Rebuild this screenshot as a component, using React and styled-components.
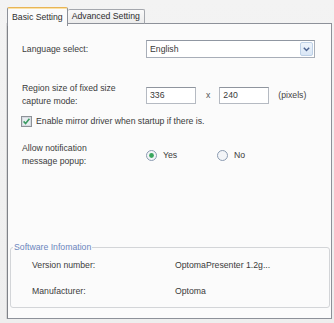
import styled, { createGlobalStyle } from 'styled-components';

const GlobalStyle = createGlobalStyle`
  html, body {
    margin: 0;
    padding: 0;
    background: #f1f1f1;
  }
  * {
    box-sizing: border-box;
  }
`;

// Fenêtre entière
const Screen = styled.div`
  width: 334px;
  height: 323px;
  padding: 7px 0 0 7px;
  font-family: 'Liberation Sans', Arial, sans-serif;
  font-size: 8.7px;
  color: #3a3a3a;
  background: linear-gradient(#f3f3f3, #eeeeee);
`;

const TabBar = styled.div`
  display: flex;
  align-items: flex-end;
  height: 17px;
  margin-bottom: -1px;
  position: relative;
  z-index: 1;
`;

const Tab = styled.div`
  display: flex;
  align-items: center;
  padding: 0 4px;
  height: ${(p) => (p.$active ? '19px' : '15px')};
  line-height: 1;
  border: 1px solid ${(p) => (p.$active ? '#8d9199' : '#a4a7ad')};
  border-top: 1px solid ${(p) => (p.$active ? '#e8b556' : '#a4a7ad')};
  border-bottom: ${(p) => (p.$active ? 'none' : '1px solid #8d9199')};
  border-left: ${(p) => (p.$active ? '1px solid #8d9199' : 'none')};
  background: ${(p) => (p.$active ? '#fbfbfb' : 'linear-gradient(#fafafa, #ececec)')};
  border-radius: 2px 2px 0 0;
  color: #2e2e2e;
  padding-top: ${(p) => (p.$active ? '1px' : '0')};
  margin-bottom: ${(p) => (p.$active ? '-2px' : '0')};
  box-shadow: ${(p) => (p.$active ? 'inset 0 1px 0 #fbe1a6' : 'none')};
`;

const Panel = styled.div`
  width: 325px;
  height: 296px;
  display: flex;
  flex-direction: column;
  background: #fbfbfb;
  border: 1px solid #8d9199;
  border-left-color: #7f8288;
  box-shadow: -1px 0 0 #d8d8d8;
`;

const Form = styled.div`
  display: flex;
  flex-direction: column;
  padding: 16px 0 0 14px;
`;

const Row = styled.div`
  display: flex;
  align-items: center;
  margin-top: ${(p) => p.$gap || 0}px;
`;

const Label = styled.div`
  width: 124px;
  line-height: 13px;
  color: #3c3c3c;
`;

const Select = styled.div`
  width: 169px;
  height: 18px;
  display: flex;
  align-items: center;
  justify-content: space-between;
  padding: 1px 1px 1px 3px;
  background: #fff;
  border: 1px solid #a8aeb8;
  border-top-color: #9097a2;
`;

const DropButton = styled.div`
  width: 13px;
  height: 14px;
  display: flex;
  align-items: center;
  justify-content: center;
  border: 1px solid #bdd0e6;
  border-radius: 2px;
  background: linear-gradient(#eef4fb, #d9e6f5);
`;

const TextBox = styled.div`
  width: ${(p) => p.$w}px;
  height: 17px;
  display: flex;
  align-items: center;
  padding-left: 3px;
  background: #fff;
  border: 1px solid #b5bac2;
  border-top-color: #8f959e;
`;

const Times = styled.span`
  margin: 0 9px 0 10px;
  color: #555;
`;

const Unit = styled.span`
  margin-left: 9px;
  color: #444;
`;

const CheckRow = styled.label`
  display: flex;
  align-items: center;
  gap: 4px;
  margin-left: -1px;
  margin-top: 6px;
  line-height: 14px;
`;

const Radios = styled.div`
  display: flex;
  align-items: center;
`;

const RadioItem = styled.span`
  display: flex;
  align-items: center;
  gap: 6px;
  width: ${(p) => p.$w}px;
`;

const GroupBox = styled.fieldset`
  margin: auto 1px 10px 2px;
  padding: 0 0 9px 2px;
  border: 1px solid #d3d5d8;
  border-radius: 3px;
`;

const Legend = styled.legend`
  padding: 0 1px;
  line-height: 13px;
  color: #6b86bd;
`;

const InfoRow = styled.div`
  display: flex;
  line-height: 13px;
  padding-left: 19px;
  margin-top: ${(p) => p.$gap}px;
`;

const InfoLabel = styled.span`
  width: 143px;
  color: #3c3c3c;
`;

const Checkbox = () => (
  <svg width="11" height="11" viewBox="0 0 11 11">
    <rect x="0.5" y="0.5" width="10" height="10" fill="#f4f4f4" stroke="#8e9298" />
    <rect x="1.5" y="1.5" width="8" height="8" fill="#e9edf1" stroke="#d6dbe1" />
    <path d="M2.6 5.4 L4.6 7.6 L8.4 2.8" fill="none" stroke="#3c9b63" strokeWidth="1.6" />
  </svg>
);

const Radio = ({ checked }) => (
  <svg width="11" height="11" viewBox="0 0 11 11">
    <circle cx="5.5" cy="5.5" r="5" fill="#f3f5f8" stroke="#8b9bb1" />
    {checked && <circle cx="5.5" cy="5.5" r="2.4" fill="#3aa65e" />}
  </svg>
);

const Chevron = () => (
  <svg width="7" height="5" viewBox="0 0 7 5">
    <path d="M0.8 0.8 L3.5 3.6 L6.2 0.8" fill="none" stroke="#4c6390" strokeWidth="1.4" />
  </svg>
);

export default function App() {
  return (
    <>
      <GlobalStyle />
      <Screen>
        <TabBar>
          <Tab $active>Basic Setting</Tab>
          <Tab>Advanced Setting</Tab>
        </TabBar>
        <Panel>
          <Form>
            <Row>
              <Label>Language select:</Label>
              <Select>
                <span>English</span>
                <DropButton>
                  <Chevron />
                </DropButton>
              </Select>
            </Row>
            <Row $gap={24}>
              <Label>
                Region size of fixed size
                <br />
                capture mode:
              </Label>
              <TextBox $w={50}>336</TextBox>
              <Times>x</Times>
              <TextBox $w={50}>240</TextBox>
              <Unit>(pixels)</Unit>
            </Row>
            <CheckRow>
              <Checkbox />
              Enable mirror driver when startup if there is.
            </CheckRow>
            <Row $gap={14}>
              <Label>
                Allow notification
                <br />
                message popup:
              </Label>
              <Radios>
                <RadioItem $w={71}>
                  <Radio checked />
                  Yes
                </RadioItem>
                <RadioItem $w={40}>
                  <Radio />
                  No
                </RadioItem>
              </Radios>
            </Row>
          </Form>
          <GroupBox>
            <Legend>Software Infomation</Legend>
            <InfoRow $gap={5}>
              <InfoLabel>Version number:</InfoLabel>
              <span>OptomaPresenter 1.2g...</span>
            </InfoRow>
            <InfoRow $gap={13}>
              <InfoLabel>Manufacturer:</InfoLabel>
              <span>Optoma</span>
            </InfoRow>
          </GroupBox>
        </Panel>
      </Screen>
    </>
  );
}
